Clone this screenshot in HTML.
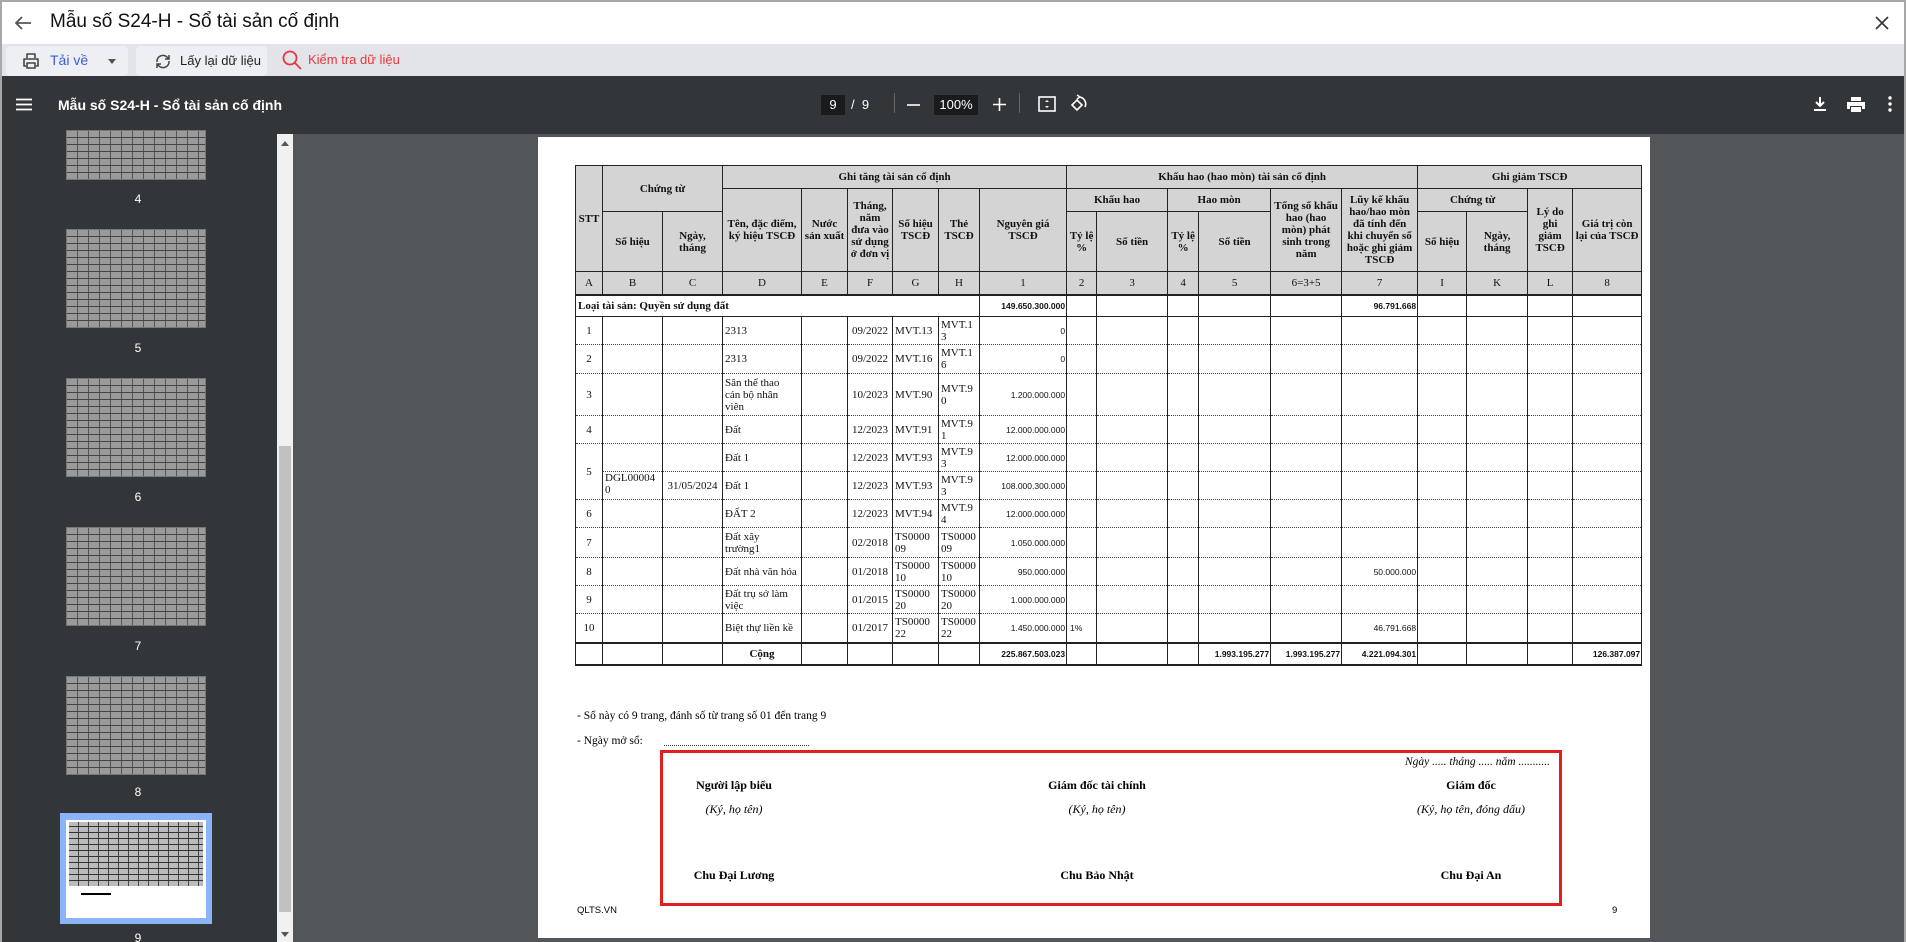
<!DOCTYPE html>
<html><head><meta charset="utf-8"><style>
*{box-sizing:border-box;margin:0;padding:0}
body{width:1906px;height:942px;overflow:hidden;background:#a7a7a7;font-family:"Liberation Sans",sans-serif;position:relative}
.abs{position:absolute}
#frame{left:2px;top:2px;right:2px;bottom:0;background:#fff;overflow:hidden}
#title{left:0;top:0;width:100%;height:42px;background:#fff}
#tb{left:0;top:42px;width:100%;height:33px;background:#e3e4e9}
.btn{position:absolute;top:2px;height:30px;background:#eeeff2;border-radius:4px}
#bar{left:0;top:74px;width:100%;height:58px;background:#323639;color:#fff}
#side{left:0;top:132px;width:275px;height:810px;background:#323639}
#scroll{left:275px;top:132px;width:16px;height:810px;background:#f1f1f1}
#main{left:291px;top:132px;right:0;height:810px;background:#525659}
#page{left:245px;top:3px;width:1112px;height:801px;background:#fff}
.th{position:absolute;left:64px;width:140px;background:#9a9a9a;border:1px solid #777;
background-image:repeating-linear-gradient(0deg,transparent 0 6px,#444 6px 7px),repeating-linear-gradient(90deg,transparent 0 10px,#555 10px 11px)}
.lbl{position:absolute;left:0;width:272px;text-align:center;color:#fff;font-size:12px}
table{border-collapse:collapse;table-layout:fixed;font-family:"Liberation Serif",serif;font-size:11px;color:#111}
td{border-left:1.5px solid #222;border-right:1.5px solid #222;padding:0 2px;line-height:12px;overflow:hidden;white-space:nowrap}
thead td{background:#d4d4d4;font-weight:bold;text-align:center;border:1.5px solid #222;white-space:normal}
tbody td{border-bottom:1px dotted #444}
.n{text-align:right;font-family:"Liberation Sans",sans-serif;font-size:8.5px;padding-right:1px}
.b{font-weight:bold}
.c{text-align:center}
.sig{position:absolute;font-family:"Liberation Serif",serif;font-size:12px;text-align:center;width:240px}
</style></head><body>
<div id="frame" class="abs">
<div id="title" class="abs">
<svg class="abs" style="left:12px;top:13px" width="18" height="16" viewBox="0 0 18 16"><path d="M17 8H2M8 2L2 8l6 6" stroke="#555" stroke-width="1.8" fill="none"/></svg>
<div class="abs" style="left:48px;top:9px;font-size:19px;color:#111">Mẫu số S24-H - Sổ tài sản cố định</div>
<svg class="abs" style="left:1873px;top:14px" width="14" height="14"><path d="M1 1L13 13M13 1L1 13" stroke="#333" stroke-width="1.6"/></svg>
</div>
<div id="tb" class="abs">
<div class="btn" style="left:4px;width:122px">
<svg class="abs" style="left:16px;top:6px" width="18" height="18" viewBox="0 0 18 18"><path d="M5 6V2h8v4M4 14H2V7h14v7h-2M5 11h8v5H5z" stroke="#444" stroke-width="1.6" fill="none" stroke-linejoin="round"/></svg>
<div class="abs" style="left:44px;top:6px;font-size:14px;color:#3b5bdb">Tải về</div>
<svg class="abs" style="left:102px;top:13px" width="8" height="5"><path d="M0 0h8L4 5z" fill="#555"/></svg>
</div>
<div class="btn" style="left:134px;width:131px">
<svg class="abs" style="left:18px;top:7px" width="18" height="17" viewBox="0 0 18 17"><path d="M3 9a6 6 0 0 1 10-5l2 2M15 8a6 6 0 0 1-10 5l-2-2M15 2v4h-4M3 15v-4h4" stroke="#444" stroke-width="1.5" fill="none"/></svg>
<div class="abs" style="left:44px;top:7px;font-size:13px;color:#222">Lấy lại dữ liệu</div>
</div>
<svg class="abs" style="left:280px;top:6px" width="20" height="20" viewBox="0 0 20 20"><circle cx="8" cy="8" r="6.5" stroke="#e5383b" stroke-width="1.8" fill="none"/><path d="M13 13l6 6" stroke="#e5383b" stroke-width="1.8"/></svg>
<div class="abs" style="left:306px;top:8px;font-size:13px;color:#e5383b">Kiểm tra dữ liệu</div>
</div>
<div id="bar" class="abs">
<svg class="abs" style="left:14px;top:22px" width="16" height="13"><path d="M0 1.5h16M0 6.5h16M0 11.5h16" stroke="#fff" stroke-width="1.8"/></svg>
<div class="abs" style="left:56px;top:21px;font-size:14px;font-weight:bold">Mẫu số S24-H - Sổ tài sản cố định</div>
<div class="abs" style="left:819px;top:19px;width:24px;height:20px;background:#191b1c;font-size:13px;text-align:center;line-height:20px">9</div>
<div class="abs" style="left:849px;top:21px;font-size:13px">/&nbsp;&nbsp;9</div>
<div class="abs" style="left:892px;top:17px;width:1px;height:20px;background:#666"></div>
<svg class="abs" style="left:905px;top:28px" width="13" height="2"><path d="M0 1h13" stroke="#fff" stroke-width="1.6"/></svg>
<div class="abs" style="left:932px;top:19px;width:44px;height:20px;background:#191b1c;font-size:13px;text-align:center;line-height:20px">100%</div>
<svg class="abs" style="left:991px;top:22px" width="13" height="13"><path d="M0 6.5h13M6.5 0v13" stroke="#fff" stroke-width="1.6"/></svg>
<div class="abs" style="left:1017px;top:17px;width:1px;height:20px;background:#666"></div>
<svg class="abs" style="left:1036px;top:20px" width="18" height="16"><rect x="1" y="1" width="16" height="14" stroke="#fff" stroke-width="1.6" fill="none"/><path d="M9 4l-2 2h4zM9 12l-2-2h4z" fill="#fff"/></svg>
<svg class="abs" style="left:1068px;top:18px" width="18" height="19" viewBox="0 0 18 19"><path d="M2 11l5-5 5 5-5 5z" stroke="#fff" stroke-width="1.6" fill="none"/><path d="M9 3a7 7 0 0 1 6 10" stroke="#fff" stroke-width="1.6" fill="none"/><path d="M7 1l3 2-3 2" stroke="#fff" stroke-width="1.4" fill="none"/></svg>
<svg class="abs" style="left:1811px;top:21px" width="14" height="15"><path d="M7 0v9M3 5l4 4 4-4" stroke="#fff" stroke-width="2" fill="none"/><path d="M1 13h12" stroke="#fff" stroke-width="2"/></svg>
<svg class="abs" style="left:1845px;top:21px" width="18" height="15"><path d="M4 0h10v4H4z" fill="#fff"/><path d="M0 5h18v7h-3V9H3v3H0z" fill="#fff"/><path d="M4 10h10v5H4z" fill="#fff"/></svg>
<svg class="abs" style="left:1886px;top:20px" width="4" height="16"><circle cx="2" cy="2" r="1.7" fill="#fff"/><circle cx="2" cy="8" r="1.7" fill="#fff"/><circle cx="2" cy="14" r="1.7" fill="#fff"/></svg>
</div>
<div id="side" class="abs">
<div class="th" style="top:-4px;height:50px"></div><div class="lbl" style="top:58px">4</div>
<div class="th" style="top:95px;height:99px"></div><div class="lbl" style="top:207px">5</div>
<div class="th" style="top:244px;height:99px"></div><div class="lbl" style="top:356px">6</div>
<div class="th" style="top:393px;height:99px"></div><div class="lbl" style="top:505px">7</div>
<div class="th" style="top:542px;height:99px"></div><div class="lbl" style="top:651px">8</div>
<div class="abs" style="left:58px;top:679px;width:152px;height:111px;background:#8ab4f8"></div>
<div class="abs" style="left:64px;top:686px;width:140px;height:98px;background:#fff">
<div class="abs" style="left:3px;top:2px;width:134px;height:64px;background:#bbb;background-image:repeating-linear-gradient(0deg,transparent 0 5px,#333 5px 6px),repeating-linear-gradient(90deg,transparent 0 9px,#444 9px 10px)"></div>
<div class="abs" style="left:15px;top:73px;width:30px;height:2px;background:#000"></div>
</div>
<div class="lbl" style="top:797px">9</div>
</div>
<div id="scroll" class="abs">
<svg class="abs" style="left:4px;top:7px" width="8" height="5"><path d="M0 5h8L4 0z" fill="#555"/></svg>
<div class="abs" style="left:2px;top:312px;width:12px;height:466px;background:#c1c1c1"></div>
<svg class="abs" style="left:4px;top:798px" width="8" height="5"><path d="M0 0h8L4 5z" fill="#555"/></svg>
</div>
<div id="main" class="abs">
<div id="page" class="abs">
<table class="abs" style="left:37px;top:28px;width:1066px">
<colgroup><col style="width:27px"><col style="width:60px"><col style="width:60px"><col style="width:79px"><col style="width:46px"><col style="width:45px"><col style="width:46px"><col style="width:41px"><col style="width:87px"><col style="width:30px"><col style="width:71px"><col style="width:31px"><col style="width:72px"><col style="width:71px"><col style="width:76px"><col style="width:49px"><col style="width:61px"><col style="width:45px"><col style="width:69px"></colgroup>
<thead>
<tr style="height:23px"><td rowspan="3">STT</td><td colspan="2" rowspan="2">Chứng từ</td><td colspan="6">Ghi tăng tài sản cố định</td><td colspan="6">Khấu hao (hao mòn) tài sản cố định</td><td colspan="4">Ghi giảm TSCĐ</td></tr>
<tr style="height:23px"><td rowspan="2">Tên, đặc điểm, ký hiệu TSCĐ</td><td rowspan="2">Nước sản xuất</td><td rowspan="2">Tháng, năm đưa vào sử dụng ở đơn vị</td><td rowspan="2">Số hiệu TSCĐ</td><td rowspan="2">Thẻ TSCĐ</td><td rowspan="2">Nguyên giá TSCĐ</td><td colspan="2">Khấu hao</td><td colspan="2">Hao mòn</td><td rowspan="2">Tổng số khấu hao (hao mòn) phát sinh trong năm</td><td rowspan="2">Lũy kế khấu hao/hao mòn đã tính đến khi chuyển sổ hoặc ghi giảm TSCĐ</td><td colspan="2">Chứng từ</td><td rowspan="2">Lý do ghi giảm TSCĐ</td><td rowspan="2">Giá trị còn lại của TSCĐ</td></tr>
<tr style="height:60px"><td>Số hiệu</td><td>Ngày, tháng</td><td>Tỷ lệ %</td><td>Số tiền</td><td>Tỷ lệ %</td><td>Số tiền</td><td>Số hiệu</td><td>Ngày, tháng</td></tr>
<tr style="height:23px;font-weight:normal"><td style="font-weight:normal">A</td><td style="font-weight:normal">B</td><td style="font-weight:normal">C</td><td style="font-weight:normal">D</td><td style="font-weight:normal">E</td><td style="font-weight:normal">F</td><td style="font-weight:normal">G</td><td style="font-weight:normal">H</td><td style="font-weight:normal">1</td><td style="font-weight:normal">2</td><td style="font-weight:normal">3</td><td style="font-weight:normal">4</td><td style="font-weight:normal">5</td><td style="font-weight:normal">6=3+5</td><td style="font-weight:normal">7</td><td style="font-weight:normal">I</td><td style="font-weight:normal">K</td><td style="font-weight:normal">L</td><td style="font-weight:normal">8</td></tr>
</thead>
<tbody>
<tr style="height:22px;border-top:2px solid #222"><td colspan="8" class="b" style="border-bottom:1.5px solid #222">Loại tài sản: Quyền sử dụng đất</td><td class="n b" style="border-bottom:1.5px solid #222">149.650.300.000</td><td style="border-bottom:1.5px solid #222"></td><td style="border-bottom:1.5px solid #222"></td><td style="border-bottom:1.5px solid #222"></td><td style="border-bottom:1.5px solid #222"></td><td style="border-bottom:1.5px solid #222"></td><td class="n b" style="border-bottom:1.5px solid #222">96.791.668</td><td style="border-bottom:1.5px solid #222"></td><td style="border-bottom:1.5px solid #222"></td><td style="border-bottom:1.5px solid #222"></td><td style="border-bottom:1.5px solid #222"></td></tr>
<tr style="height:28px"><td class="c">1</td><td></td><td></td><td>2313</td><td></td><td class="c">09/2022</td><td>MVT.13</td><td>MVT.1<br>3</td><td class="n">0</td><td></td><td></td><td></td><td></td><td></td><td></td><td></td><td></td><td></td><td></td></tr>
<tr style="height:29px"><td class="c">2</td><td></td><td></td><td>2313</td><td></td><td class="c">09/2022</td><td>MVT.16</td><td>MVT.1<br>6</td><td class="n">0</td><td></td><td></td><td></td><td></td><td></td><td></td><td></td><td></td><td></td><td></td></tr>
<tr style="height:42px"><td class="c">3</td><td></td><td></td><td>Sân thể thao<br>cán bộ nhân<br>viên</td><td></td><td class="c">10/2023</td><td>MVT.90</td><td>MVT.9<br>0</td><td class="n">1.200.000.000</td><td></td><td></td><td></td><td></td><td></td><td></td><td></td><td></td><td></td><td></td></tr>
<tr style="height:28px"><td class="c">4</td><td></td><td></td><td>Đất</td><td></td><td class="c">12/2023</td><td>MVT.91</td><td>MVT.9<br>1</td><td class="n">12.000.000.000</td><td></td><td></td><td></td><td></td><td></td><td></td><td></td><td></td><td></td><td></td></tr>
<tr style="height:28px"><td class="c" rowspan="2">5</td><td></td><td></td><td>Đất 1</td><td></td><td class="c">12/2023</td><td>MVT.93</td><td>MVT.9<br>3</td><td class="n">12.000.000.000</td><td></td><td></td><td></td><td></td><td></td><td></td><td></td><td></td><td></td><td></td></tr>
<tr style="height:28px"><td style="vertical-align:top">DGL00004<br>0</td><td class="c">31/05/2024</td><td>Đất 1</td><td></td><td class="c">12/2023</td><td>MVT.93</td><td>MVT.9<br>3</td><td class="n">108.000.300.000</td><td></td><td></td><td></td><td></td><td></td><td></td><td></td><td></td><td></td><td></td></tr>
<tr style="height:28px"><td class="c">6</td><td></td><td></td><td>ĐẤT 2</td><td></td><td class="c">12/2023</td><td>MVT.94</td><td>MVT.9<br>4</td><td class="n">12.000.000.000</td><td></td><td></td><td></td><td></td><td></td><td></td><td></td><td></td><td></td><td></td></tr>
<tr style="height:30px"><td class="c">7</td><td></td><td></td><td>Đất xây<br>trường1</td><td></td><td class="c">02/2018</td><td>TS0000<br>09</td><td>TS0000<br>09</td><td class="n">1.050.000.000</td><td></td><td></td><td></td><td></td><td></td><td></td><td></td><td></td><td></td><td></td></tr>
<tr style="height:28px"><td class="c">8</td><td></td><td></td><td>Đất nhà văn hóa</td><td></td><td class="c">01/2018</td><td>TS0000<br>10</td><td>TS0000<br>10</td><td class="n">950.000.000</td><td></td><td></td><td></td><td></td><td></td><td class="n">50.000.000</td><td></td><td></td><td></td><td></td></tr>
<tr style="height:28px"><td class="c">9</td><td></td><td></td><td>Đất trụ sở làm<br>việc</td><td></td><td class="c">01/2015</td><td>TS0000<br>20</td><td>TS0000<br>20</td><td class="n">1.000.000.000</td><td></td><td></td><td></td><td></td><td></td><td></td><td></td><td></td><td></td><td></td></tr>
<tr style="height:29px"><td class="c">10</td><td></td><td></td><td>Biệt thự liền kề</td><td></td><td class="c">01/2017</td><td>TS0000<br>22</td><td>TS0000<br>22</td><td class="n">1.450.000.000</td><td class="n" style="text-align:left;padding-left:3px">1%</td><td></td><td></td><td></td><td></td><td class="n">46.791.668</td><td></td><td></td><td></td><td></td></tr>
<tr style="height:22px;border-top:2px solid #222;border-bottom:2px solid #222"><td></td><td></td><td></td><td class="b c">Cộng</td><td></td><td></td><td></td><td></td><td class="n b">225.867.503.023</td><td></td><td></td><td></td><td class="n b">1.993.195.277</td><td class="n b">1.993.195.277</td><td class="n b">4.221.094.301</td><td></td><td></td><td></td><td class="n b">126.387.097</td></tr>
</tbody></table>
<div class="abs" style="left:39px;top:573px;font-family:'Liberation Serif',serif;font-size:11.5px">- Sổ này có 9 trang, đánh số từ trang số 01 đến trang 9</div>
<div class="abs" style="left:39px;top:598px;font-family:'Liberation Serif',serif;font-size:11.5px">- Ngày mở sổ:</div>
<div class="abs" style="left:126px;top:608px;width:145px;border-bottom:1px dotted #333"></div>
<div class="abs" style="left:122px;top:613px;width:902px;height:156px;border:3px solid #e0201f"></div>
<div class="abs" style="left:760px;top:619px;width:252px;text-align:right;font-family:'Liberation Serif',serif;font-size:11.5px;font-style:italic">Ngày ..... tháng ..... năm ...........</div>
<div class="sig b" style="left:76px;top:641px">Người lập biểu</div>
<div class="sig" style="left:76px;top:665px;font-style:italic">(Ký, họ tên)</div>
<div class="sig b" style="left:76px;top:731px">Chu Đại Lương</div>
<div class="sig b" style="left:439px;top:641px">Giám đốc tài chính</div>
<div class="sig" style="left:439px;top:665px;font-style:italic">(Ký, họ tên)</div>
<div class="sig b" style="left:439px;top:731px">Chu Bảo Nhật</div>
<div class="sig b" style="left:813px;top:641px">Giám đốc</div>
<div class="sig" style="left:813px;top:665px;font-style:italic">(Ký, họ tên, đóng dấu)</div>
<div class="sig b" style="left:813px;top:731px">Chu Đại An</div>
<div class="abs" style="left:39px;top:768px;font-size:9.5px">QLTS.VN</div>
<div class="abs" style="left:1074px;top:768px;font-size:9.5px">9</div>
</div>
</div>
</div>
</body></html>
